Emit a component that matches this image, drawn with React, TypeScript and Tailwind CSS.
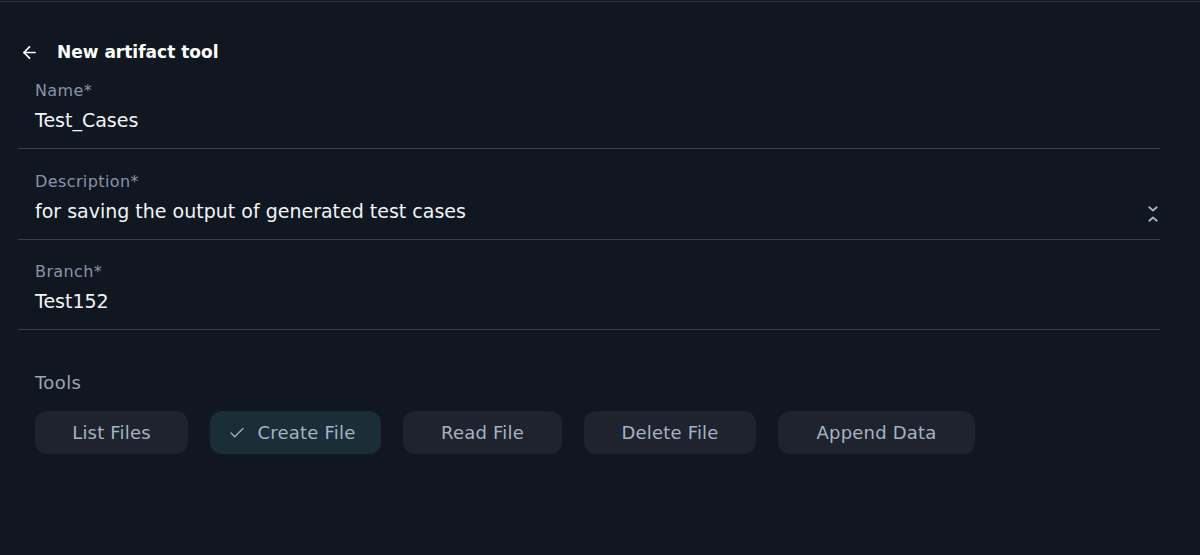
import React from 'react';
import { ArrowLeft, Check } from 'lucide-react';

const tools = [
    { name: 'List Files', width: 'w-[153px]', selected: false },
    { name: 'Create File', width: 'w-[171px]', selected: true },
    { name: 'Read File', width: 'w-[159px]', selected: false },
    { name: 'Delete File', width: 'w-[172px]', selected: false },
    { name: 'Append Data', width: 'w-[197px]', selected: false },
];

// collapse handle at the right of the textarea
const Collapse = () => (
    <svg width="10" height="16" viewBox="0 0 10 16" fill="none" stroke="#a3aebe" strokeWidth="2" strokeLinecap="square" className="mr-[2px] mt-[6px]">
        <polyline points="1.5,1.5 5,4.5 8.5,1.5" />
        <polyline points="1.5,14.5 5,11.5 8.5,14.5" />
    </svg>
);

const Field: React.FC<{ label: string; value: string; pad: string; icon?: boolean }> = ({ label, value, pad, icon }) => (
    <div className={`border-b border-[#3a3f4a] pl-[17px] pb-[14px] ${pad}`}>
        <div className="text-[16px] leading-[20px] tracking-[0.4px] text-[#8894a8]">{label}*</div>
        <div className="mt-[5px] flex items-center justify-between">
            <span className="text-[19px] leading-[28px] text-[#f2f4f7]">{value}</span>
            {icon && <Collapse />}
        </div>
    </div>
);

export default function App() {
    return (
        <div className="min-h-[555px] w-[1200px] bg-[#111721] font-['DejaVu_Sans',sans-serif]">
            <div className="pt-px">
                <div className="h-px bg-[#2d323c]" />
            </div>
            {/* header */}
            <div className="mt-[31px] flex h-[40px] items-center pl-[20px]">
                <ArrowLeft size={19} strokeWidth={2.2} className="mt-[-2px] text-white" />
                <h1 className="ml-[18px] text-[17px] font-semibold text-white">New artifact tool</h1>
            </div>

            <div className="ml-[18px] mr-[40px] -mt-[2px]">
                <Field label="Name" value="Test_Cases" pad="pt-[10px]" />
                <Field label="Description" value="for saving the output of generated test cases" pad="pt-[23px]" icon />
                <Field label="Branch" value="Test152" pad="pt-[22px]" />
            </div>

            {/* tools */}
            <div className="mt-[41px] pl-[35px]">
                <div className="text-[18px] leading-[24px] tracking-[0.4px] text-[#9ba4b2]">Tools</div>
                <div className="mt-[16px] flex gap-[22px]">
                    {tools.map((t) => (
                        <button
                            key={t.name}
                            className={`flex h-[43px] items-center justify-center gap-[12px] rounded-[12px] text-[18px] tracking-[0.2px] text-[#a6b2c4] ${t.width} ${t.selected ? 'bg-[#1b2d36] pr-[8px]' : 'bg-[#1e232d]'}`}
                        >
                            {t.selected && <Check size={18} strokeWidth={1.6} className="text-[#a6b2c4]" />}
                            {t.name}
                        </button>
                    ))}
                </div>
            </div>
        </div>
    );
}
